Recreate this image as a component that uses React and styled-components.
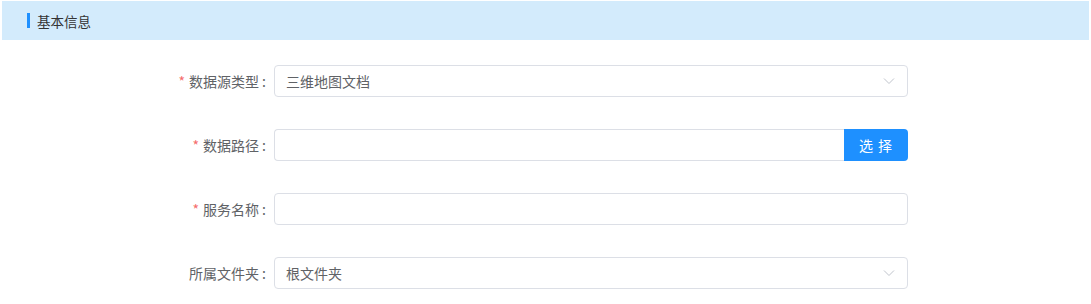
import styled, { createGlobalStyle } from "styled-components";

const GlobalStyle = createGlobalStyle`
  body {
    margin: 0;
    background: #fff;
    font-family: "Noto Sans CJK SC", "Liberation Sans", sans-serif;
  }
`;

const Page = styled.div`
  width: 1091px;
  height: 304px;
  overflow: hidden;
`;

const SectionHeader = styled.div`
  margin: 1px 2px 0 2px;
  height: 39px;
  background: #d3ebfc;
  display: flex;
  align-items: center;
  padding-left: 25px;
  gap: 7px;
  font-size: 13.5px;
  color: #333;
`;

const Bar = styled.span`
  width: 3px;
  height: 15px;
  background: #1e90ff;
`;

const Form = styled.div`
  display: flex;
  flex-direction: column;
  gap: 32px;
  padding: 25px 0 0 146px;
`;

const Row = styled.div`
  display: flex;
  align-items: center;
  gap: 8px;
`;

const Label = styled.label`
  width: 120px;
  text-align: right;
  font-size: 14px;
  color: #606266;
  white-space: nowrap;
  &::before {
    content: ${(p) => (p.$required ? '"*"' : '""')};
    color: #f56c6c;
    margin-right: 4px;
  }
  &::after {
    content: ":";
    margin-left: 3px;
  }
`;

const Field = styled.div`
  width: 634px;
  height: 32px;
  box-sizing: border-box;
  border: 1px solid #dcdfe6;
  border-radius: 4px;
  display: flex;
  align-items: center;
  padding: 0 12px 0 11px;
  font-size: 14px;
  color: #606266;
  background: #fff;
`;

const Value = styled.span`
  flex: 1;
`;

const Group = styled.div`
  width: 634px;
  height: 32px;
  display: flex;
`;

const GroupInput = styled.div`
  flex: 1;
  box-sizing: border-box;
  border: 1px solid #dcdfe6;
  border-right: none;
  border-radius: 4px 0 0 4px;
`;

const PickButton = styled.button`
  width: 64px;
  border: none;
  border-radius: 0 4px 4px 0;
  background: #1e90ff;
  color: #fff;
  font-family: inherit;
  font-size: 14px;
  letter-spacing: 1px;
  padding: 0;
`;

const Chevron = () => (
  <svg width="12" height="8" viewBox="0 0 12 8">
    <polyline points="1,1.5 6,6.5 11,1.5" fill="none" stroke="#c0c4cc" strokeWidth="1" />
  </svg>
);

export default function App() {
  return (
    <Page>
      <GlobalStyle />
      <SectionHeader>
        <Bar />
        基本信息
      </SectionHeader>
      <Form>
        <Row>
          <Label $required>数据源类型</Label>
          <Field>
            <Value>三维地图文档</Value>
            <Chevron />
          </Field>
        </Row>
        <Row>
          <Label $required>数据路径</Label>
          <Group>
            <GroupInput />
            <PickButton>选 择</PickButton>
          </Group>
        </Row>
        <Row>
          <Label $required>服务名称</Label>
          <Field />
        </Row>
        <Row>
          <Label>所属文件夹</Label>
          <Field>
            <Value>根文件夹</Value>
            <Chevron />
          </Field>
        </Row>
      </Form>
    </Page>
  );
}
